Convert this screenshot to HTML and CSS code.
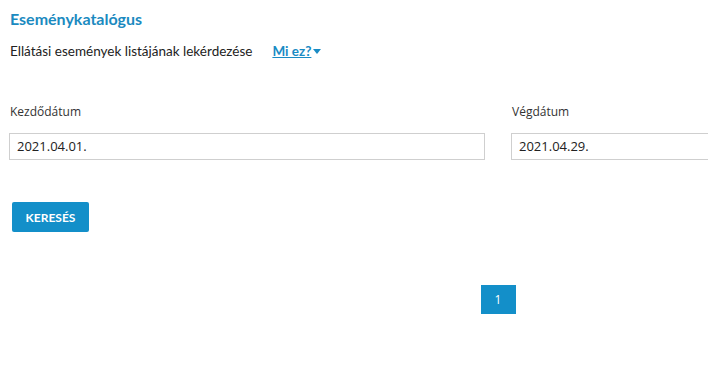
FILE: index.html
```html
<!DOCTYPE html>
<html lang="hu">
<head>
<meta charset="utf-8">
<title>Eseménykatalógus</title>
<link rel="stylesheet" href="styles.css">
</head>
<body>
<div class="page">
  <h1 class="title">Eseménykatalógus</h1>
  <div class="intro">
    <span class="intro-text">Ellátási események listájának lekérdezése</span>
    <a class="help" href="#">Mi ez?<svg class="caret" width="8" height="5" viewBox="0 0 8 5"><path d="M0 0h8L4 5z" fill="#1a8bc4"/></svg></a>
  </div>
  <div class="fields">
    <div class="field">
      <label class="label">Kezdődátum</label>
      <div class="input">2021.04.01.</div>
    </div>
    <div class="field">
      <label class="label">Végdátum</label>
      <div class="input">2021.04.29.</div>
    </div>
  </div>
  <div class="actions">
    <button class="btn">KERESÉS</button>
  </div>
  <div class="pager">
    <span class="page-num">1</span>
  </div>
</div>
</body>
</html>
```
FILE: styles.css
```css
html, body {
  margin: 0;
  padding: 0;
  background: #fff;
  overflow: hidden;
}
body {
  font-family: "Lato", "Noto Sans", sans-serif;
  color: #222;
}
.page {
  width: 978px;
  padding: 9px 0 0 9px;
}
.title {
  margin: 0 0 0 1px;
  font-size: 16px;
  font-weight: 700;
  color: #1b8ac0;
  line-height: 20px;
}
.intro {
  display: flex;
  align-items: center;
  margin: 13px 0 0 1px;
  font-size: 13.5px;
  line-height: 18px;
}
.intro-text {
  color: #222;
}
.help {
  margin-left: 20px;
  color: #1a8bc4;
  font-weight: 700;
  text-decoration: underline;
  display: inline-flex;
  align-items: center;
  gap: 2px;
}
.caret {
  display: block;
}
.fields {
  display: grid;
  grid-template-columns: 476px 476px;
  column-gap: 26px;
  margin-top: 43px;
}
.label {
  display: block;
  margin-left: 1px;
  font-family: "Open Sans", sans-serif;
  font-size: 12px;
  line-height: 17px;
  color: #333;
}
.input {
  margin-top: 13px;
  height: 27px;
  box-sizing: border-box;
  border: 1px solid #cfcfcf;
  padding: 0 7px;
  font-family: "Open Sans", sans-serif;
  font-size: 13px;
  line-height: 25px;
  color: #222;
}
.actions {
  margin-top: 42px;
  padding-left: 3px;
}
.btn {
  width: 77px;
  height: 30px;
  border: 0;
  border-radius: 2px;
  background: #138fc9;
  color: #fff;
  font-family: "Lato", sans-serif;
  font-weight: 700;
  font-size: 12px;
  padding: 0;
}
.pager {
  display: flex;
  justify-content: center;
  margin-top: 53px;
}
.page-num {
  width: 35px;
  height: 29px;
  background: #138fc9;
  color: #fff;
  font-family: "Open Sans", sans-serif;
  font-size: 12px;
  display: flex;
  align-items: center;
  justify-content: center;
}
```
